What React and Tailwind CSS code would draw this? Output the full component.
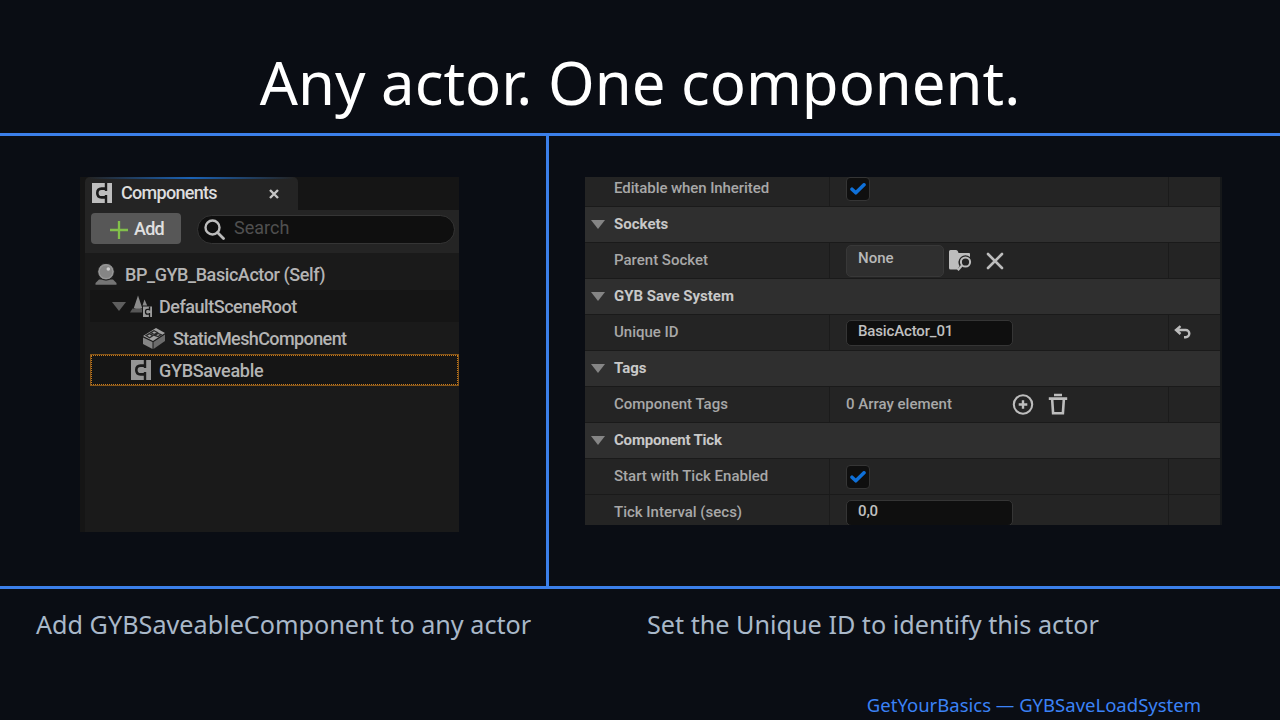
import React from "react";

// square "C" glyph used for actor components
function ComponentIcon({ className }) {
  return (
    <svg viewBox="0 0 20 20" className={className}>
      <path fill="currentColor" d="M0 0h20v20H0z" />
      <path fill="none" stroke="#1c1c1c" strokeWidth="2.6" d="M14 5.600H9.500Q5.300 5.600 5.300 10t4.200 4.400H14" />
      <path fill="#1c1c1c" d="M12.800 0h2.400v8h-2.400zM12.800 12h2.400v8h-2.400z" />
    </svg>
  );
}

function ActorIcon() {
  return (
    <svg viewBox="0 0 22 22" className="w-[22px] h-[22px]">
      <path fill="#757575" d="M4 16.5h14l3.5 3.5v1.800H.5V20z" />
      <circle cx="11" cy="8.700" r="8.400" fill="#858585" stroke="#1a1a1a" strokeWidth="1" />
      <circle cx="11" cy="8.700" r="6.800" fill="none" stroke="#9a9a9a" strokeWidth="1" />
      <circle cx="13.300" cy="6" r="1.800" fill="#d0d0d0" />
    </svg>
  );
}

function SceneRootIcon() {
  return (
    <svg viewBox="0 0 22 22" className="w-[22px] h-[22px]">
      <path fill="#8c8c8c" d="M8 0.5 12.2 13q-4.200 2.400-8.400 0z" />
      <path fill="#8c8c8c" d="M14.500 4.500 17.200 10.500h-4.700z" />
      <path fill="#565656" d="M2.500 13.500h9.500v4H0z" />
      <path fill="#9a9a9a" d="M13 11.500h9V22h-9z" />
      <path fill="none" stroke="#151515" strokeWidth="1.300" d="M19.500 14.300h-2.300q-1.700 0-1.700 2.400t1.700 2.400h2.300M19.500 11.500v4M19.500 18v4" />
    </svg>
  );
}

function MeshIcon() {
  return (
    <svg viewBox="0 0 22 21" className="w-[22px] h-[21px]">
      <path fill="#a2a2a2" d="M0 8 13 0l9 5-12 8z" />
      <path fill="#858585" d="M0 9.500 9.500 14v7L0 16z" />
      <path fill="#6b6b6b" d="M10.500 14 22 6.500V13l-11.500 8z" />
      <path fill="none" stroke="#2a2a2a" strokeWidth="1.300" d="m3 7.600 3.400-2 3.600 2-3.400 2.200zM7.800 4.600 11 2.700l3.500 1.800-3.200 2.100zM12 7.500l3-2 3 1.200-3 1.800z" />
    </svg>
  );
}

function Check() {
  return (
    <div className="flex h-6 w-6 shrink-0 items-center justify-center rounded-[4px] border-[1.5px] border-[#353535] bg-[#0f0f0f]">
      <svg viewBox="0 0 16 12" className="h-3 w-4">
        <path d="M2 6.200 5.800 9.800 14 1.800" fill="none" stroke="#0f70d8" strokeWidth="3.500" strokeLinecap="round" strokeLinejoin="round" />
      </svg>
    </div>
  );
}

function Arrow({ className }) {
  return (
    <svg viewBox="0 0 14 9" className={className}>
      <path d="M0 0h14L7 9z" fill="currentColor" />
    </svg>
  );
}

function ComponentsPanel() {
  return (
    <div className="flex h-[355px] w-[379px] flex-col border-l-[5px] border-[#151515] bg-[#1a1a1a] font-['Roboto',sans-serif] text-[18px] font-medium text-[#b4b4b4]">
      <div className="flex h-[33px] shrink-0 bg-[#151515]">
        <div className="flex w-[213px] flex-col rounded-t-[5px] bg-[#242424]">
          <div className="ml-1 h-[2px] w-[205px] shrink-0 bg-linear-to-r from-transparent via-[#1b62b5] to-transparent" />
          <div className="flex flex-1 items-center pb-[4px] pl-[7px] pr-[19px]">
            <ComponentIcon className="h-5 w-5 text-[#bebebe]" />
            <span className="ml-[9px] tracking-[-0.7px] text-[#dddddd]">Components</span>
            <svg viewBox="0 0 10 10" className="ml-auto mt-[2px] h-[10px] w-[10px]">
              <path d="M1 1l8 8M9 1L1 9" stroke="#c4c4c4" strokeWidth="2.400" />
            </svg>
          </div>
        </div>
      </div>
      <div className="flex h-[43px] shrink-0 items-start bg-[#242424] pl-[6px] pr-[4px]">
        <div className="mt-[3px] flex h-[31px] w-[90px] items-center rounded-[4px] bg-[#575757] pl-[19px] text-[#e0e0e0]">
          <svg viewBox="0 0 18 18" className="mt-[2px] h-[18px] w-[18px]">
            <path d="M9 0v18M0 9h18" stroke="#82c04b" strokeWidth="2.300" />
          </svg>
          <span className="ml-[6px] tracking-[-0.8px]">Add</span>
        </div>
        <div className="ml-[16px] mt-[5px] flex h-[29px] flex-1 items-center rounded-full border-[1.5px] border-[#353535] bg-[#0f0f0f] pl-[6px]">
          <svg viewBox="0 0 21 21" className="h-[21px] w-[21px]">
            <circle cx="8.500" cy="8.500" r="7" fill="none" stroke="#bcbcbc" strokeWidth="2.400" />
            <path d="m13.500 13.500 6 6" stroke="#bcbcbc" strokeWidth="2.800" strokeLinecap="round" />
          </svg>
          <span className="-mt-[4px] ml-[9px] font-normal text-[#505050]">Search</span>
        </div>
      </div>
      <div className="flex flex-col pl-[5px] pt-[5px]">
        <div className="flex h-8 items-center pl-[5px]">
          <ActorIcon />
          <span className="ml-[8px] tracking-[-0.42px]">BP_GYB_BasicActor (Self)</span>
        </div>
        <div className="flex h-8 items-center bg-[#151515] pl-[22px]">
          <Arrow className="h-[9px] w-[14px] text-[#5e5e5e]" />
          <div className="ml-[4px]"><SceneRootIcon /></div>
          <span className="ml-[7px] tracking-[-0.47px]">DefaultSceneRoot</span>
        </div>
        <div className="flex h-8 items-center pl-[53px]">
          <MeshIcon />
          <span className="ml-[8px] tracking-[-0.6px]">StaticMeshComponent</span>
        </div>
        <div className="flex h-8 items-center border border-[#85551a] bg-[#151515] pl-[40px] outline-1 -outline-offset-2 outline-dotted outline-[#c67a1c]">
          <ComponentIcon className="h-5 w-5 text-[#959595]" />
          <span className="ml-2 tracking-[-0.3px]">GYBSaveable</span>
        </div>
      </div>
    </div>
  );
}

function Header({ title }) {
  return (
    <div className="flex h-9 shrink-0 items-center border-b border-[#1a1a1a] bg-[#2f2f2f] pl-[6px] text-[#c8c8c8]">
      <Arrow className="h-[9px] w-[14px] text-[#858585]" />
      <span className="-mt-[1px] ml-[9px] font-bold">{title}</span>
    </div>
  );
}

function Row({ label, children, action }) {
  return (
    <div className="flex h-9 shrink-0 border-b border-[#1a1a1a] bg-[#242424]">
      <div className="flex w-[245px] items-center border-r border-[#1b1b1b] pl-[29px]">
        <span className="-mt-[1px]">{label}</span>
      </div>
      <div className="flex w-[339px] items-center border-r border-[#1b1b1b] pl-4">{children}</div>
      <div className="flex flex-1 items-center pl-[5px]">{action}</div>
    </div>
  );
}

function TextField({ value }) {
  return (
    <div className="mt-[1px] flex h-[26px] w-[167px] items-center rounded-[5px] border-[1.5px] border-[#353535] bg-[#0f0f0f] pl-[11px] tracking-[-0.15px] text-[#c0c0c0]">
      <span className="-mt-[4px]">{value}</span>
    </div>
  );
}

function DetailsPanel() {
  return (
    <div className="flex h-[348px] w-[637px] flex-col justify-end overflow-hidden border-r-2 border-[#16181a] bg-[#242424] font-['Roboto',sans-serif] text-[15px] font-medium text-[#a8a8a8]">
      <div className="-mb-[6px] flex flex-col">
        <Row label={<span className="tracking-[-0.08px]">Editable when Inherited</span>}><Check /></Row>
        <Header title="Sockets" />
        <Row label="Parent Socket">
          <div className="flex h-8 w-[98px] items-center rounded-[5px] border border-[#383838] bg-[#2f2f2f] pl-[11px] text-[#b8b8b8]">
            <span className="-mt-[4px]">None</span>
          </div>
          <svg viewBox="0 0 23 23" className="ml-[5px] h-[23px] w-[23px]">
            <path fill="#bdbdbd" d="M0 2.500q0-1.500 1.500-1.500H7q1.500 0 2 1.500l.5 1.500H20q1 0 1 1v3a7 7 0 0 0-10.500 9L8.500 20.500H1.500Q0 20.500 0 19z" />
            <circle cx="16.500" cy="13" r="4.600" fill="none" stroke="#bdbdbd" strokeWidth="2" />
            <path d="m13.200 16.300-4.400 5" stroke="#bdbdbd" strokeWidth="2.200" />
          </svg>
          <svg viewBox="0 0 18 18" className="ml-[14px] h-[18px] w-[18px]">
            <path d="M2 2l14 14M16 2L2 16" stroke="#bdbdbd" strokeWidth="2.600" strokeLinecap="round" />
          </svg>
        </Row>
        <Header title="GYB Save System" />
        <Row
          label="Unique ID"
          action={
            <svg viewBox="0 0 18 14" className="-mt-px h-[14px] w-[18px]">
              <path d="M6.500 1.200 2 5l4.500 4M2.500 5h9.200a3.500 3.500 0 0 1 0 7.200H10" fill="none" stroke="#bbbbbb" strokeWidth="2.400" />
            </svg>
          }
        >
          <TextField value="BasicActor_01" />
        </Row>
        <Header title="Tags" />
        <Row label="Component Tags">
          <span className="-mt-[1px] w-[166px]">0 Array element</span>
          <svg viewBox="0 0 22 22" className="h-[22px] w-[22px]">
            <circle cx="11" cy="10.500" r="9.200" fill="none" stroke="#bdbdbd" strokeWidth="2.100" />
            <path d="M11 6.200v8.600M6.700 10.500h8.600" stroke="#bdbdbd" strokeWidth="2.400" />
          </svg>
          <svg viewBox="0 0 20 22" className="-mt-px ml-[14px] h-[22px] w-[20px]">
            <path fill="#bdbdbd" d="M6 .8h8v2.500H6zM.8 4.300h18.400v2.700H.8z" />
            <path d="M4.200 7l.9 13.300h9.800l.9-13.300" fill="none" stroke="#bdbdbd" strokeWidth="2.600" />
          </svg>
        </Row>
        <Header title={<span className="tracking-[-0.2px]">Component Tick</span>} />
        <Row label="Start with Tick Enabled"><Check /></Row>
        <Row label="Tick Interval (secs)"><TextField value="0,0" /></Row>
      </div>
    </div>
  );
}

export default function App() {
  return (
    <div className="flex h-[720px] w-[1280px] flex-col overflow-hidden bg-[#0a0d14] font-['Noto_Sans',sans-serif]">
      <div className="flex h-[133px] shrink-0 justify-center pt-[41px]">
        <h1 className="whitespace-nowrap text-[59.85px] leading-[82px] text-white">Any actor. One component.</h1>
      </div>
      <div className="flex h-[456px] shrink-0 border-y-[3px] border-[#3b7fe9]">
        <div className="w-[549px] shrink-0 border-r-[3px] border-[#3b7fe9] pl-[80px] pt-[41px]">
          <ComponentsPanel />
        </div>
        <div className="pl-[36px] pt-[41px]">
          <DetailsPanel />
        </div>
      </div>
      <div className="flex h-[70px] shrink-0 pl-[36px] pt-[17px] text-[25.2px] leading-[36px] text-[#a9b8c9]">
        <p className="w-[611px] whitespace-nowrap">Add GYBSaveableComponent to any actor</p>
        <p className="whitespace-nowrap">Set the Unique ID to identify this actor</p>
      </div>
      <div className="flex justify-end pr-[79px] pt-[33px]">
        <p className="whitespace-nowrap text-[18.5px] leading-[26px] text-[#3b82f6]">GetYourBasics — GYBSaveLoadSystem</p>
      </div>
    </div>
  );
}
